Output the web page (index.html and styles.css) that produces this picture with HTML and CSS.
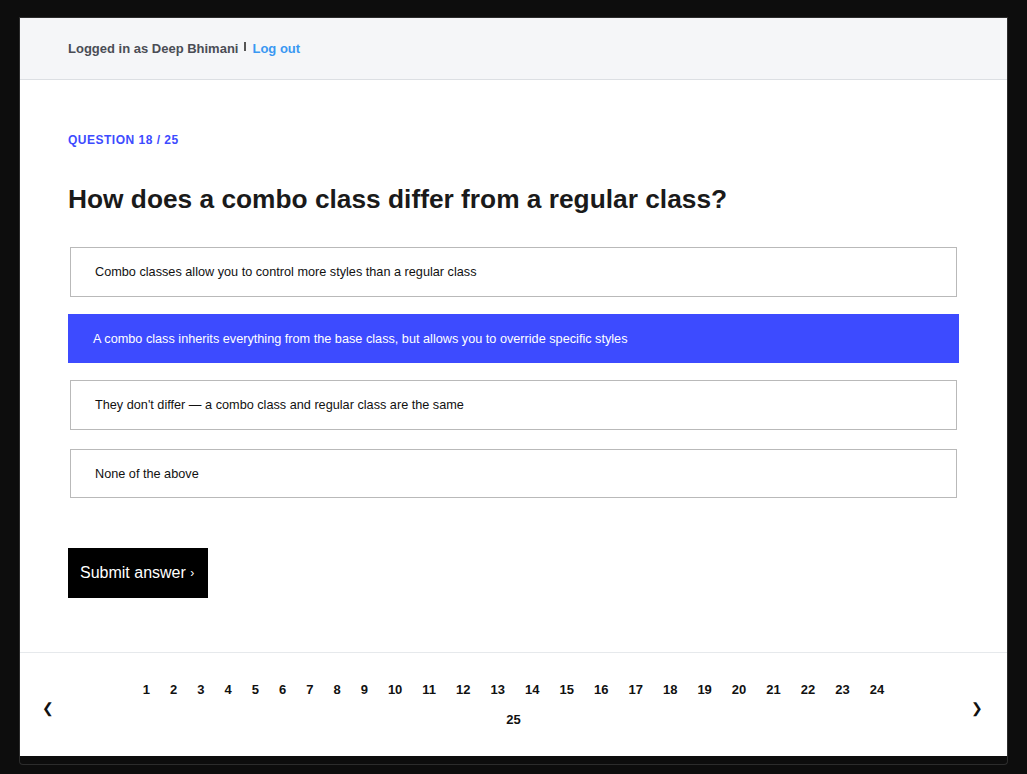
FILE: index.html
```html
<!DOCTYPE html>
<html>
<head>
<meta charset="utf-8">
<link rel="stylesheet" href="styles.css">
</head>
<body>
<div class="window">
  <div class="app">
    <header class="topbar">
      <span class="user">Logged in as Deep Bhimani</span>
      <span class="sep"></span>
      <a class="logout" href="#">Log out</a>
    </header>
    <main class="quiz">
      <div class="qlabel">QUESTION 18 / 25</div>
      <h1 class="qtitle">How does a combo class differ from a regular class?</h1>
      <div class="options">
        <div class="option">Combo classes allow you to control more styles than a regular class</div>
        <div class="option selected">A combo class inherits everything from the base class, but allows you to override specific styles</div>
        <div class="option">They don't differ — a combo class and regular class are the same</div>
        <div class="option last">None of the above</div>
      </div>
      <button class="submit">Submit answer <span class="chev">›</span></button>
    </main>
    <footer class="pager">
      <span class="arrow">❮</span>
      <div class="pages">
        <span class="pg">1</span><span class="pg">2</span><span class="pg">3</span><span class="pg">4</span><span class="pg">5</span><span class="pg">6</span><span class="pg">7</span><span class="pg">8</span><span class="pg">9</span><span class="pg">10</span><span class="pg">11</span><span class="pg">12</span><span class="pg">13</span><span class="pg">14</span><span class="pg">15</span><span class="pg">16</span><span class="pg">17</span><span class="pg">18</span><span class="pg">19</span><span class="pg">20</span><span class="pg">21</span><span class="pg">22</span><span class="pg">23</span><span class="pg">24</span><span class="pg">25</span>
      </div>
      <span class="arrow">❯</span>
    </footer>
  </div>
</div>
</body>
</html>
```

FILE: styles.css
```css
html, body {
  margin: 0;
  padding: 0;
  background: #0d0d0d;
}
body {
  padding: 17px 19px 0 19px;
  height: 774px;
  box-sizing: border-box;
  overflow: hidden;
  font-family: "Liberation Sans", Arial, sans-serif;
}
.window {
  border: 1px solid #2c2c2c;
  border-top: none;
  border-radius: 0 0 4px 4px;
  padding-bottom: 8px;
  width: 987px;
}
.app {
  background: #fff;
  border-top: 1px solid #2c2c2c;
}
.topbar {
  height: 61px;
  background: #f5f6f8;
  border-bottom: 1px solid #dcdfe3;
  display: flex;
  align-items: center;
  padding: 0 48px;
  font-size: 13px;
  font-weight: bold;
}
.user {
  color: #4a4d55;
}
.sep {
  display: inline-block;
  width: 2px;
  height: 9px;
  background: #555;
  margin: 0 6px 5px 6px;
}
.logout {
  color: #3a98f2;
  text-decoration: none;
}
.quiz {
  padding: 53px 48px 54px 48px;
}
.qlabel {
  color: #3d4bff;
  font-size: 12px;
  font-weight: bold;
  line-height: 14px;
  letter-spacing: 0.5px;
}
.qtitle {
  margin: 36px 0 0 0;
  font-size: 26.3px;
  line-height: 32px;
  font-weight: bold;
  color: #1a1a1a;
}
.options {
  margin-top: 32px;
  display: flex;
  flex-direction: column;
  gap: 17px;
}
.option {
  margin: 0 2px;
  height: 50px;
  box-sizing: border-box;
  border: 1px solid #b9b9b9;
  display: flex;
  align-items: center;
  padding: 0 24px;
  font-size: 12.7px;
  color: #111;
}
.option.selected {
  margin: 0;
  height: 49px;
  border: none;
  background: #3d4bff;
  color: #fff;
  padding: 0 25px;
}
.option.last {
  margin-top: 2px;
  height: 49px;
}
.submit {
  margin-top: 50px;
  display: block;
  width: 140px;
  height: 50px;
  background: #000;
  color: #fff;
  border: none;
  font-family: "Liberation Sans", Arial, sans-serif;
  font-size: 16px;
  text-align: left;
  padding: 0 12px;
}
.chev {
  font-size: 12px;
  position: relative;
  top: -1px;
}
.pager {
  border-top: 1px solid #e6e9ec;
  height: 104px;
  display: flex;
  align-items: center;
  justify-content: space-between;
  padding: 0 22px;
  box-sizing: border-box;
}
.arrow {
  font-size: 14px;
  color: #111;
  width: 14px;
  margin-top: 6px;
}
.pages {
  width: 780px;
  display: flex;
  flex-wrap: wrap;
  justify-content: center;
  line-height: 30px;
  font-size: 13px;
  font-weight: bold;
  color: #111;
}
.pg {
  padding: 0 10px;
}
```
